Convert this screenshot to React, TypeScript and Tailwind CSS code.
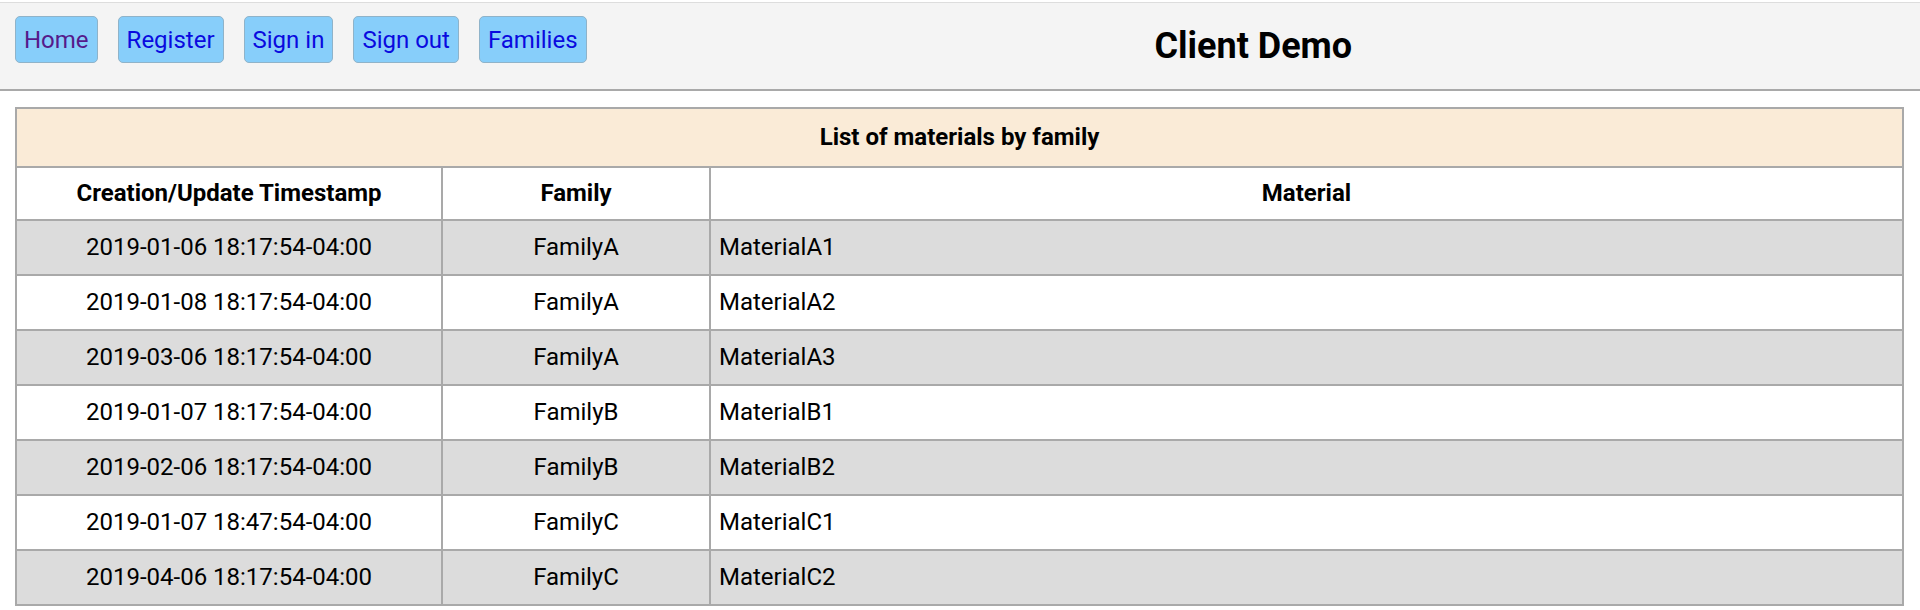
const navLinks = [
  { label: "Home", visited: true },
  { label: "Register", visited: false },
  { label: "Sign in", visited: false },
  { label: "Sign out", visited: false },
  { label: "Families", visited: false },
];

const materials = [
  { ts: "2019-01-06 18:17:54-04:00", family: "FamilyA", material: "MaterialA1" },
  { ts: "2019-01-08 18:17:54-04:00", family: "FamilyA", material: "MaterialA2" },
  { ts: "2019-03-06 18:17:54-04:00", family: "FamilyA", material: "MaterialA3" },
  { ts: "2019-01-07 18:17:54-04:00", family: "FamilyB", material: "MaterialB1" },
  { ts: "2019-02-06 18:17:54-04:00", family: "FamilyB", material: "MaterialB2" },
  { ts: "2019-01-07 18:47:54-04:00", family: "FamilyC", material: "MaterialC1" },
  { ts: "2019-04-06 18:17:54-04:00", family: "FamilyC", material: "MaterialC2" },
];

export default function App() {
  return (
    <div className="min-h-screen bg-white text-black font-['Roboto',sans-serif]">
      {/* Header */}
      <header className="mt-[2px] h-[89px] flex bg-[#f4f4f4] border-t border-t-[#dddddd] border-b-2 border-b-[#a9a9a9]">
        <nav className="shrink-0 pl-[15px] pt-[13px] flex items-start gap-[20px]">
          {navLinks.map((link) => (
            <a
              key={link.label}
              href="#"
              className={`h-[47px] px-[8px] flex items-center rounded-[5px] border border-[#8fb3c9] bg-[#87cefa] text-[24px] ${
                link.visited ? "text-[#551a8b]" : "text-[#0a0adf]"
              }`}
            >
              {link.label}
            </a>
          ))}
        </nav>
        <div className="flex-1 flex items-center justify-center">
          <h1 className="text-[36px] font-bold leading-none">Client Demo</h1>
        </div>
      </header>

      {/* Materials table */}
      <main className="pt-[16px] pl-[15px]">
        <table className="w-[1889px] border-collapse border-2 border-[#a9a9a9] text-[24px]">
          <thead>
            <tr>
              <th colSpan={3} className="border-2 border-[#a9a9a9] bg-[#faebd7] py-[14px] leading-[29px] font-bold">
                List of materials by family
              </th>
            </tr>
            <tr className="bg-white">
              <th className="w-[426px] border-2 border-[#a9a9a9] py-[11px] leading-[29px] font-bold">
                Creation/Update Timestamp
              </th>
              <th className="w-[268px] border-2 border-[#a9a9a9] py-[11px] leading-[29px] font-bold">
                Family
              </th>
              <th className="border-2 border-[#a9a9a9] py-[11px] leading-[29px] font-bold">
                Material
              </th>
            </tr>
          </thead>
          <tbody>
            {materials.map((m, i) => (
              <tr key={m.material} className={i % 2 === 0 ? "bg-[#dcdcdc]" : "bg-white"}>
                <td className="border-2 border-[#a9a9a9] py-3 leading-[29px] text-center">{m.ts}</td>
                <td className="border-2 border-[#a9a9a9] py-3 leading-[29px] text-center">{m.family}</td>
                <td className="border-2 border-[#a9a9a9] py-3 pl-2 leading-[29px] text-left">{m.material}</td>
              </tr>
            ))}
          </tbody>
        </table>
      </main>
    </div>
  );
}
